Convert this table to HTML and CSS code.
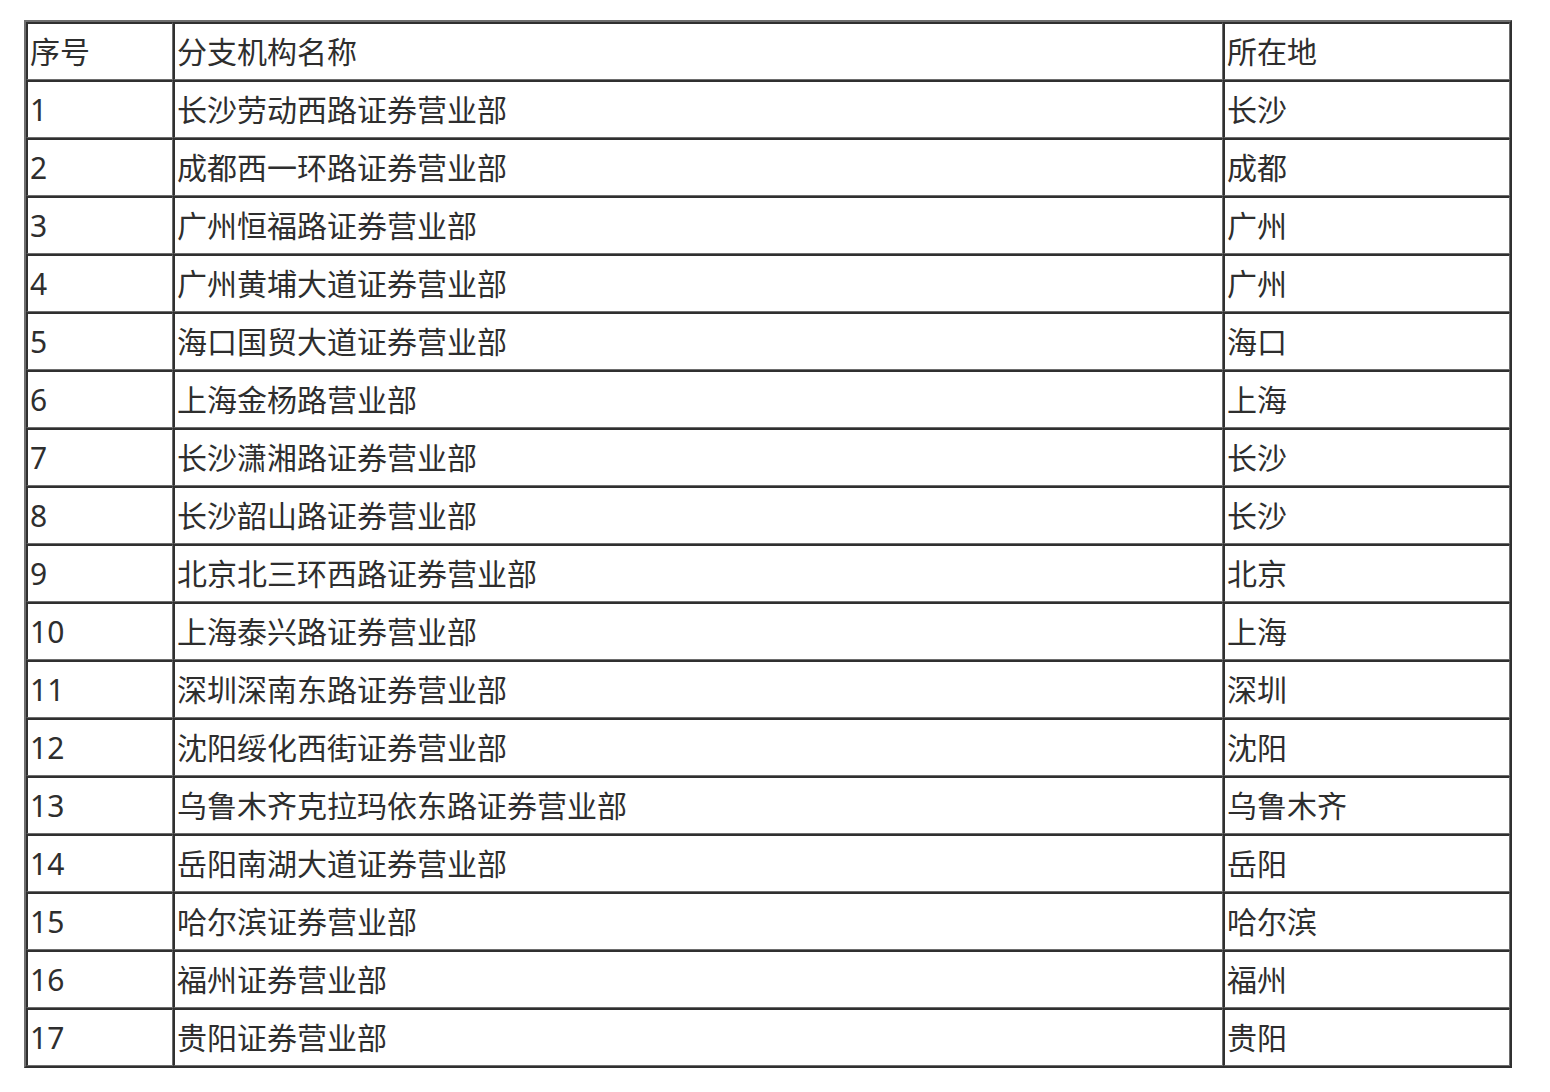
FILE: index.html
```html
<!DOCTYPE html>
<html lang="zh">
<head>
<meta charset="utf-8">
<link rel="stylesheet" href="styles.css">
</head>
<body>
<table class="branches">
<colgroup><col class="c1"><col class="c2"><col class="c3"></colgroup>
<tr><td>序号</td><td>分支机构名称</td><td>所在地</td></tr>
<tr><td>1</td><td>长沙劳动西路证券营业部</td><td>长沙</td></tr>
<tr><td>2</td><td>成都西一环路证券营业部</td><td>成都</td></tr>
<tr><td>3</td><td>广州恒福路证券营业部</td><td>广州</td></tr>
<tr><td>4</td><td>广州黄埔大道证券营业部</td><td>广州</td></tr>
<tr><td>5</td><td>海口国贸大道证券营业部</td><td>海口</td></tr>
<tr><td>6</td><td>上海金杨路营业部</td><td>上海</td></tr>
<tr><td>7</td><td>长沙潇湘路证券营业部</td><td>长沙</td></tr>
<tr><td>8</td><td>长沙韶山路证券营业部</td><td>长沙</td></tr>
<tr><td>9</td><td>北京北三环西路证券营业部</td><td>北京</td></tr>
<tr><td>10</td><td>上海泰兴路证券营业部</td><td>上海</td></tr>
<tr><td>11</td><td>深圳深南东路证券营业部</td><td>深圳</td></tr>
<tr><td>12</td><td>沈阳绥化西街证券营业部</td><td>沈阳</td></tr>
<tr><td>13</td><td>乌鲁木齐克拉玛依东路证券营业部</td><td>乌鲁木齐</td></tr>
<tr><td>14</td><td>岳阳南湖大道证券营业部</td><td>岳阳</td></tr>
<tr><td>15</td><td>哈尔滨证券营业部</td><td>哈尔滨</td></tr>
<tr><td>16</td><td>福州证券营业部</td><td>福州</td></tr>
<tr><td>17</td><td>贵阳证券营业部</td><td>贵阳</td></tr>
</table>
</body>
</html>
```
FILE: styles.css
```css
html, body {
  margin: 0;
  padding: 0;
  background: #fff;
}
body {
  padding: 20px 0 0 24px;
}
.branches {
  border-collapse: separate;
  border-spacing: 0;
  table-layout: fixed;
  width: 1488px;
  border-style: solid;
  border-width: 2px;
  border-color: #6e6e6e #303030 #303030 #6e6e6e;
  font-family: "Noto Sans", "Noto Sans CJK SC", sans-serif;
  font-size: 30px;
  color: #2e2e2e;
}
.c1 { width: 147px; }
.c2 { width: 1050px; }
.c3 { width: 287px; }
.branches td {
  border-style: solid;
  border-width: 2px 1px 1px 2px;
  border-color: #303030 #6e6e6e #6e6e6e #303030;
  padding: 8px 3px 7px 2px;
  height: 40px;
  line-height: 40px;
  vertical-align: middle;
  white-space: nowrap;
}
```
